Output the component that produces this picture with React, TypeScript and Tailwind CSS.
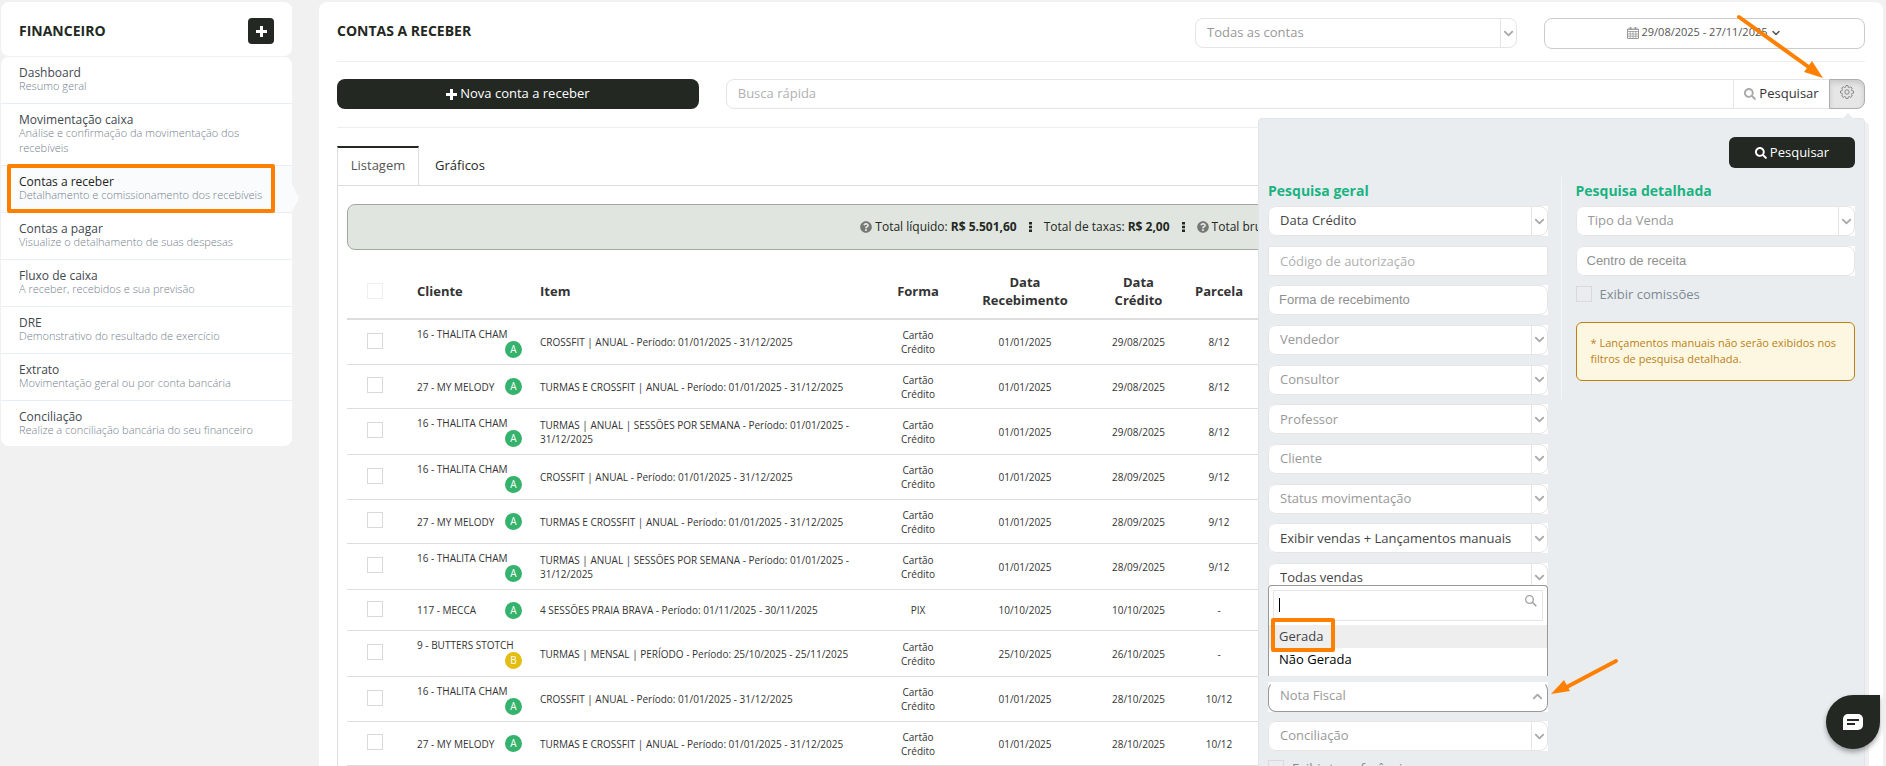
import { FaSearch, FaQuestionCircle } from "react-icons/fa";
import { FiChevronDown, FiChevronUp } from "react-icons/fi";

const menuItems = [
  { title: "Dashboard", description: "Resumo geral" },
  { title: "Movimentação caixa", description: "Análise e confirmação da movimentação dos recebíveis" },
  { title: "Contas a receber", description: "Detalhamento e comissionamento dos recebíveis", active: true },
  { title: "Contas a pagar", description: "Visualize o detalhamento de suas despesas" },
  { title: "Fluxo de caixa", description: "A receber, recebidos e sua previsão" },
  { title: "DRE", description: "Demonstrativo do resultado de exercício" },
  { title: "Extrato", description: "Movimentação geral ou por conta bancária" },
  { title: "Conciliação", description: "Realize a conciliação bancária do seu financeiro" },
];

const crossfit = "CROSSFIT | ANUAL - Período: 01/01/2025 - 31/12/2025";
const turmas = "TURMAS E CROSSFIT | ANUAL - Período: 01/01/2025 - 31/12/2025";
const sessoes = "TURMAS | ANUAL | SESSÕES POR SEMANA - Período: 01/01/2025 - 31/12/2025";

const rows = [
  { cliente: "16 - THALITA CHAM", nota: "A", item: crossfit, forma: "Cartão\nCrédito", recebimento: "01/01/2025", credito: "29/08/2025", parcela: "8/12", height: "h-[45px]" },
  { cliente: "27 - MY MELODY", nota: "A", item: turmas, forma: "Cartão\nCrédito", recebimento: "01/01/2025", credito: "29/08/2025", parcela: "8/12", height: "h-[44px]" },
  { cliente: "16 - THALITA CHAM", nota: "A", item: sessoes, forma: "Cartão\nCrédito", recebimento: "01/01/2025", credito: "29/08/2025", parcela: "8/12", height: "h-[46px]" },
  { cliente: "16 - THALITA CHAM", nota: "A", item: crossfit, forma: "Cartão\nCrédito", recebimento: "01/01/2025", credito: "28/09/2025", parcela: "9/12", height: "h-[45px]" },
  { cliente: "27 - MY MELODY", nota: "A", item: turmas, forma: "Cartão\nCrédito", recebimento: "01/01/2025", credito: "28/09/2025", parcela: "9/12", height: "h-[44px]" },
  { cliente: "16 - THALITA CHAM", nota: "A", item: sessoes, forma: "Cartão\nCrédito", recebimento: "01/01/2025", credito: "28/09/2025", parcela: "9/12", height: "h-[46px]" },
  { cliente: "117 - MECCA", nota: "A", item: "4 SESSÕES PRAIA BRAVA - Período: 01/11/2025 - 30/11/2025", forma: "PIX", recebimento: "10/10/2025", credito: "10/10/2025", parcela: "-", height: "h-[41px]" },
  { cliente: "9 - BUTTERS STOTCH", nota: "B", item: "TURMAS | MENSAL | PERÍODO - Período: 25/10/2025 - 25/11/2025", forma: "Cartão\nCrédito", recebimento: "25/10/2025", credito: "26/10/2025", parcela: "-", height: "h-[46px]" },
  { cliente: "16 - THALITA CHAM", nota: "A", item: crossfit, forma: "Cartão\nCrédito", recebimento: "01/01/2025", credito: "28/10/2025", parcela: "10/12", height: "h-[45px]" },
  { cliente: "27 - MY MELODY", nota: "A", item: turmas, forma: "Cartão\nCrédito", recebimento: "01/01/2025", credito: "28/10/2025", parcela: "10/12", height: "h-[44px]" },
];

function PlusIcon() {
  return (
    <svg width="11" height="11" viewBox="0 0 11 11" fill="currentColor">
      <path d="M4 0h3v4h4v3H7v4H4V7H0V4h4z" />
    </svg>
  );
}

function CalendarIcon() {
  return (
    <svg width="12" height="12" viewBox="0 0 12 12" fill="none" stroke="#999">
      <path d="M0.5 2h11v9.5H0.5z" />
      <path d="M0.5 2.5h11M0.5 4.5h11M0.5 7h11M0.5 9.2h11M3.2 4v7.5M6 4v7.5M8.8 4v7.5" strokeWidth="0.8" />
      <path d="M3.5 0v3M8.5 0v3" strokeWidth="1.8" />
    </svg>
  );
}

function GearIcon() {
  return (
    <svg width="14" height="14" viewBox="0 0 14 14" fill="none" stroke="currentColor">
      <path d="M6 0.6h2l.4 1.7 1 .4 1.5-.9 1.4 1.4-.9 1.5.4 1 1.7.4v2l-1.7.4-.4 1 .9 1.5-1.4 1.4-1.5-.9-1 .4-.4 1.7H6l-.4-1.7-1-.4-1.5.9L1.7 11l.9-1.5-.4-1L.5 8V6l1.7-.4.4-1-.9-1.5 1.4-1.4 1.5.9 1-.4z" />
      <circle cx="7" cy="7" r="2.2" />
    </svg>
  );
}

function Dots() {
  return (
    <svg width="3" height="10" viewBox="0 0 3 10" fill="#232823">
      <path d="M0 0h3v2.4H0zM0 3.8h3v2.4H0zM0 7.6h3V10H0z" />
    </svg>
  );
}

function SelectField({ label, dark = false }: { label: string; dark?: boolean }) {
  return (
    <div className="relative h-[30px] shrink-0 rounded-l-lg bg-white">
      <select
        aria-label={label}
        className={`h-full w-full appearance-none rounded-lg border border-[#e5e5e5] bg-white pl-[11px] pr-5 text-[13px] ${dark ? "text-[#444]" : "text-[#999]"}`}
      >
        <option>{label}</option>
      </select>
      <span className="pointer-events-none absolute inset-y-px right-px flex w-4 items-center justify-center border-l border-[#e5e5e5] text-[#aaa]">
        <FiChevronDown size={15} strokeWidth={3} className="shrink-0" />
      </span>
    </div>
  );
}

function TagField({ label }: { label: string }) {
  return (
    <div className="h-[30px] shrink-0 rounded-l-lg bg-white">
      <input
        type="text"
        aria-label={label}
        placeholder={label}
        className="block h-full w-full rounded-lg border border-[#e5e5e5] bg-white px-2.5 pb-0.5 font-['Liberation_Sans',sans-serif] text-[13px] placeholder:text-[#909090]"
      />
    </div>
  );
}

function Checkbox({ label, faded = false }: { label: string; faded?: boolean }) {
  return (
    <input
      type="checkbox"
      aria-label={label}
      className={`block size-4 appearance-none border ${faded ? "border-[#eee]" : "border-[#d9d9d9]"}`}
    />
  );
}

function Sidebar() {
  return (
    <aside className="w-[291px] shrink-0">
      <div className="flex h-[54px] items-center justify-between rounded-lg bg-white px-[18px] pt-1">
        <h2 className="text-sm font-bold text-[#232823]">FINANCEIRO</h2>
        <button type="button" aria-label="Adicionar" className="flex size-[26px] items-center justify-center rounded bg-[#232823] text-white">
          <PlusIcon />
        </button>
      </div>
      <nav className="relative mt-px rounded-lg bg-white">
        {menuItems.map((item) => (
          <a
            key={item.title}
            href="#"
            className={`relative block border-b border-[#e9eef2] px-[18px] py-2.5 last:border-b-0 last:pb-[9px] ${item.active ? "bg-[#f9fbfd]" : ""}`}
          >
            <span className={`block text-xs leading-[11px] font-medium ${item.active ? "text-[#222]" : "text-[#3f484f]"}`}>{item.title}</span>
            <span className="block text-[11px] leading-[15px] font-light text-[#75818e]">{item.description}</span>
            {item.active && (
              <>
                <svg className="absolute top-[18px] left-full" width="7" height="28" viewBox="0 0 7 28">
                  <path d="M0 0 L7 14 L0 28 Z" fill="#f9fbfd" />
                </svg>
                <span className="absolute -top-0.5 left-1.5 h-[49px] w-[268px] rounded-xs border-4 border-[#ff8000]" />
              </>
            )}
          </a>
        ))}
      </nav>
    </aside>
  );
}

function Toolbar() {
  return (
    <>
      <header className="flex h-[60px] items-start gap-[27px] border-b border-[#eee] pt-4">
        <h1 className="flex-1 pt-[3px] text-sm leading-5 font-bold text-[#232823]">CONTAS A RECEBER</h1>
        <div className="w-[322px]">
          <SelectField label="Todas as contas" />
        </div>
        <button type="button" className="flex h-[31px] w-[321px] items-center justify-center gap-0.5 rounded-lg border border-[#ccc] pb-0.5 text-[11px] text-[#555]">
          <CalendarIcon />
          29/08/2025 - 27/11/2025
          <FiChevronDown size={12} strokeWidth={3} />
        </button>
      </header>
      <div className="grid h-[66px] grid-cols-4 items-start gap-[27px] border-b border-[#eee] pt-[17px]">
        <button type="button" className="flex h-[30px] items-center justify-center gap-[3px] rounded-lg bg-[#232823] text-[13px] text-white">
          <PlusIcon />
          Nova conta a receber
        </button>
        <form className="relative col-span-3 flex h-[30px]">
          <input
            type="text"
            aria-label="Busca rápida"
            placeholder="Busca rápida"
            className="min-w-0 flex-1 rounded-l-lg border border-[#e5e5e5] px-[11px] text-[13px] placeholder:text-[#b0b0b0]"
          />
          <button type="button" className="flex w-[95px] items-center justify-center gap-[3px] border-y border-[#e5e5e5] text-[13px] text-[#333]">
            <FaSearch size={12} className="text-[#aaa]" />
            Pesquisar
          </button>
          <button type="button" aria-label="Filtros" className="flex w-9 items-center justify-center rounded-r-lg border border-[#adadad] bg-[#e6e6e6] pb-1 text-[#888] shadow-[inset_0_3px_5px_rgba(0,0,0,0.125)]">
            <GearIcon />
          </button>
          <FilterPanel />
        </form>
      </div>
    </>
  );
}

function NotaFiscal() {
  return (
    <div className="relative h-[30px] bg-white">
      <button type="button" className="flex h-full w-full items-center justify-between rounded-lg border border-[#999] border-t-white bg-white pr-0.5 pb-0.5 pl-[11px] text-[13px] text-[#999]">
        Nota Fiscal
        <FiChevronUp size={15} strokeWidth={3} className="text-[#aaa]" />
      </button>
      <div className="absolute inset-x-0 bottom-9 h-[91px] rounded-t border border-b-0 border-[#999] bg-white pt-1">
        <div className="relative mx-1 mb-1">
          <input type="text" aria-label="Buscar" className="block h-[31px] w-full border border-[#e5e5e5] px-1 text-[13px]" />
          <span className="absolute top-2 left-1.5 h-[14px] w-px bg-black" />
          <svg className="absolute top-[5px] right-1.5" width="12" height="12" viewBox="0 0 12 12" fill="none" stroke="#a0a0a0">
            <circle cx="4.5" cy="4.5" r="3.8" strokeWidth="1.3" />
            <path d="M7.3 7.3 L11.3 11.3" strokeWidth="1.6" />
          </svg>
        </div>
        <ul className="text-[13px] leading-[23px]">
          <li className="relative bg-[#eee] pl-2.5 text-[#444]">
            Gerada
            <span className="absolute -top-[7px] left-0.5 h-[34px] w-16 rounded-xs border-4 border-[#ff8000]" />
          </li>
          <li className="pl-2.5 text-black">Não Gerada</li>
        </ul>
      </div>
    </div>
  );
}

function FilterPanel() {
  return (
    <section className="absolute top-[39px] right-0 z-10 h-[700px] w-[607px] rounded-sm border border-[#e1e5ea] bg-[#e9edf0] px-[9px] pt-[18px] shadow-[4px_4px_0_rgba(0,0,0,0.06)]">
      <svg className="absolute -top-1.5 right-2.5" width="12" height="6" viewBox="0 0 12 6">
        <path d="M0 6 L6 0 L12 6 Z" fill="#e9edf0" />
      </svg>
      <div className="flex justify-end">
        <button type="button" className="flex h-[31px] w-[126px] items-center justify-center gap-[3px] rounded-md bg-[#232823] text-[13px] text-white">
          <FaSearch size={12} />
          Pesquisar
        </button>
      </div>
      <div className="mt-[9px] grid grid-cols-2 items-start gap-7">
        <div>
          <h3 className="h-[29px] pt-1 text-sm leading-5 font-bold text-[#1ab381]">Pesquisa geral</h3>
          <div className="flex h-[387px] flex-col justify-between">
            <SelectField label="Data Crédito" dark />
            <input type="text" aria-label="Código de autorização" placeholder="Código de autorização" className="h-[30px] shrink-0 border border-[#e5e5e5] bg-white px-[11px] text-[13px] placeholder:text-[#b0b0b0]" />
            <TagField label="Forma de recebimento" />
            <SelectField label="Vendedor" />
            <SelectField label="Consultor" />
            <SelectField label="Professor" />
            <SelectField label="Cliente" />
            <SelectField label="Status movimentação" />
            <SelectField label="Exibir vendas + Lançamentos manuais" dark />
            <SelectField label="Todas vendas" dark />
          </div>
          <div className="mt-[89px] flex flex-col gap-[9px]">
            <NotaFiscal />
            <SelectField label="Conciliação" />
            <label className="flex items-start gap-2 text-[13px] leading-4 text-[#808a92]">
              <Checkbox label="Exibir transferências" />
              Exibir transferências
            </label>
          </div>
        </div>
        <div className="relative">
          <span className="absolute top-0 -left-[15px] h-[222px] w-px bg-[#f3f5f7]" />
          <h3 className="h-[29px] pt-1 text-sm leading-5 font-bold text-[#1ab381]">Pesquisa detalhada</h3>
          <div className="flex flex-col gap-2.5">
            <SelectField label="Tipo da Venda" />
            <TagField label="Centro de receita" />
            <label className="flex items-center gap-2 text-[13px] leading-4 text-[#808a92]">
              <Checkbox label="Exibir comissões" />
              Exibir comissões
            </label>
          </div>
          <p className="mt-5 h-[59px] rounded-md border border-[#bb8115] bg-[#fdf7e2] px-3.5 pt-3 text-[11px] leading-4 text-[#bb8115]">
            * Lançamentos manuais não serão exibidos nos filtros de pesquisa detalhada.
          </p>
        </div>
      </div>
    </section>
  );
}

function Summary() {
  return (
    <div className="flex h-[46px] items-center justify-center gap-3 rounded-lg border border-[#a3a7a3] bg-[#e0e5df] pl-1 text-xs text-[#232823]">
      <span className="flex items-center gap-[3px]">
        <FaQuestionCircle className="text-[#777]" />
        Total líquido: <strong>R$ 5.501,60</strong>
      </span>
      <Dots />
      <span>
        Total de taxas: <strong>R$ 2,00</strong>
      </span>
      <Dots />
      <span className="flex items-center gap-[3px]">
        <FaQuestionCircle className="text-[#777]" />
        Total bruto: <strong>R$ 5.503,60</strong>
      </span>
    </div>
  );
}

function ReceivablesTable() {
  return (
    <table className="mt-1 w-full table-fixed text-center text-[10px] leading-[14px] text-[#333]">
      <colgroup>
        <col className="w-[62px]" />
        <col className="w-[123px]" />
        <col className="w-[336px]" />
        <col className="w-[100px]" />
        <col className="w-[114px]" />
        <col className="w-[113px]" />
        <col className="w-12" />
        <col />
      </colgroup>
      <thead>
        <tr className="h-[65px] border-b-2 border-[#ddd] text-[13px] leading-[18px]">
          <th className="pt-2.5 pl-5">
            <Checkbox label="Selecionar todos" faded />
          </th>
          <th className="pt-2.5 pl-2 text-left">Cliente</th>
          <th className="pt-2.5 pl-2 text-left">Item</th>
          <th className="pt-2.5">Forma</th>
          <th className="pt-2.5">Data<br />Recebimento</th>
          <th className="pt-2.5">Data<br />Crédito</th>
          <th className="pt-2.5">Parcela</th>
          <th />
        </tr>
      </thead>
      <tbody>
        {rows.map((row, index) => (
          <tr key={index} className={`border-b border-[#ddd] ${row.height}`}>
            <td className="pb-0.5 pl-5">
              <Checkbox label={`Selecionar ${row.cliente}`} />
            </td>
            <td className="pt-px pr-2.5 pl-2">
              <div className="flex flex-wrap items-center justify-between">
                <span className="whitespace-nowrap">{row.cliente}</span>
                <span className={`ml-auto size-[17px] rounded-full leading-4 text-white ${row.nota === "A" ? "bg-[#35b26b]" : "bg-[#e3bd14]"}`}>
                  {row.nota}
                </span>
              </div>
            </td>
            <td className="px-2 pt-px text-left">{row.item}</td>
            <td className="pt-px whitespace-pre-line">{row.forma}</td>
            <td className="pt-px">{row.recebimento}</td>
            <td className="pt-px">{row.credito}</td>
            <td className="pt-px">{row.parcela}</td>
            <td />
          </tr>
        ))}
      </tbody>
    </table>
  );
}

function Arrows() {
  return (
    <>
      <svg className="pointer-events-none absolute top-3 right-[60px] z-20" width="90" height="70" viewBox="0 0 90 70">
        <path d="M3 5 L74 56" stroke="#ff8000" strokeWidth="4" strokeLinecap="round" />
        <path d="M87 66 L68 60 L76 49 Z" fill="#ff8000" />
      </svg>
      <svg className="pointer-events-none absolute top-[655px] right-[265px] z-20" width="72" height="42" viewBox="0 0 72 42">
        <path d="M67 6 L14 34" stroke="#ff8000" strokeWidth="4" strokeLinecap="round" />
        <path d="M2 39 L15 25 L21 36 Z" fill="#ff8000" />
      </svg>
    </>
  );
}

export default function App() {
  return (
    <div className="relative flex h-screen gap-[27px] overflow-hidden bg-[#f1f1f1] pt-0.5 pr-[3px] pl-px font-['Open_Sans',sans-serif]">
      <Sidebar />
      <main className="min-w-0 flex-1 rounded-t-lg bg-white px-[18px]">
        <Toolbar />
        <div className="mt-[18px] flex text-[13px]">
          <button type="button" className="h-[39px] w-[82px] border-x border-t-2 border-[#ddd] border-t-[#232823] pb-0.5 text-[#555]">Listagem</button>
          <button type="button" className="h-[39px] px-4 text-[#232823]">Gráficos</button>
        </div>
        <div className="border border-[#ddd] px-[9px] pt-[18px]">
          <Summary />
          <ReceivablesTable />
        </div>
      </main>
      <Arrows />
      <button type="button" aria-label="Chat" className="fixed right-1.5 bottom-[17px] z-20 flex size-[54px] items-center justify-center rounded-full rounded-tr-md bg-[#232823] shadow-[0_3px_5px_rgba(0,0,0,0.35)]">
        <svg width="20" height="16" viewBox="0 0 20 16">
          <path d="M5 0h10a5 5 0 0 1 5 5v6a5 5 0 0 1-5 5H0V5a5 5 0 0 1 5-5z" fill="#fff" />
          <path d="M4 6h12M4 10h8" stroke="#232823" strokeWidth="2" />
        </svg>
      </button>
    </div>
  );
}
